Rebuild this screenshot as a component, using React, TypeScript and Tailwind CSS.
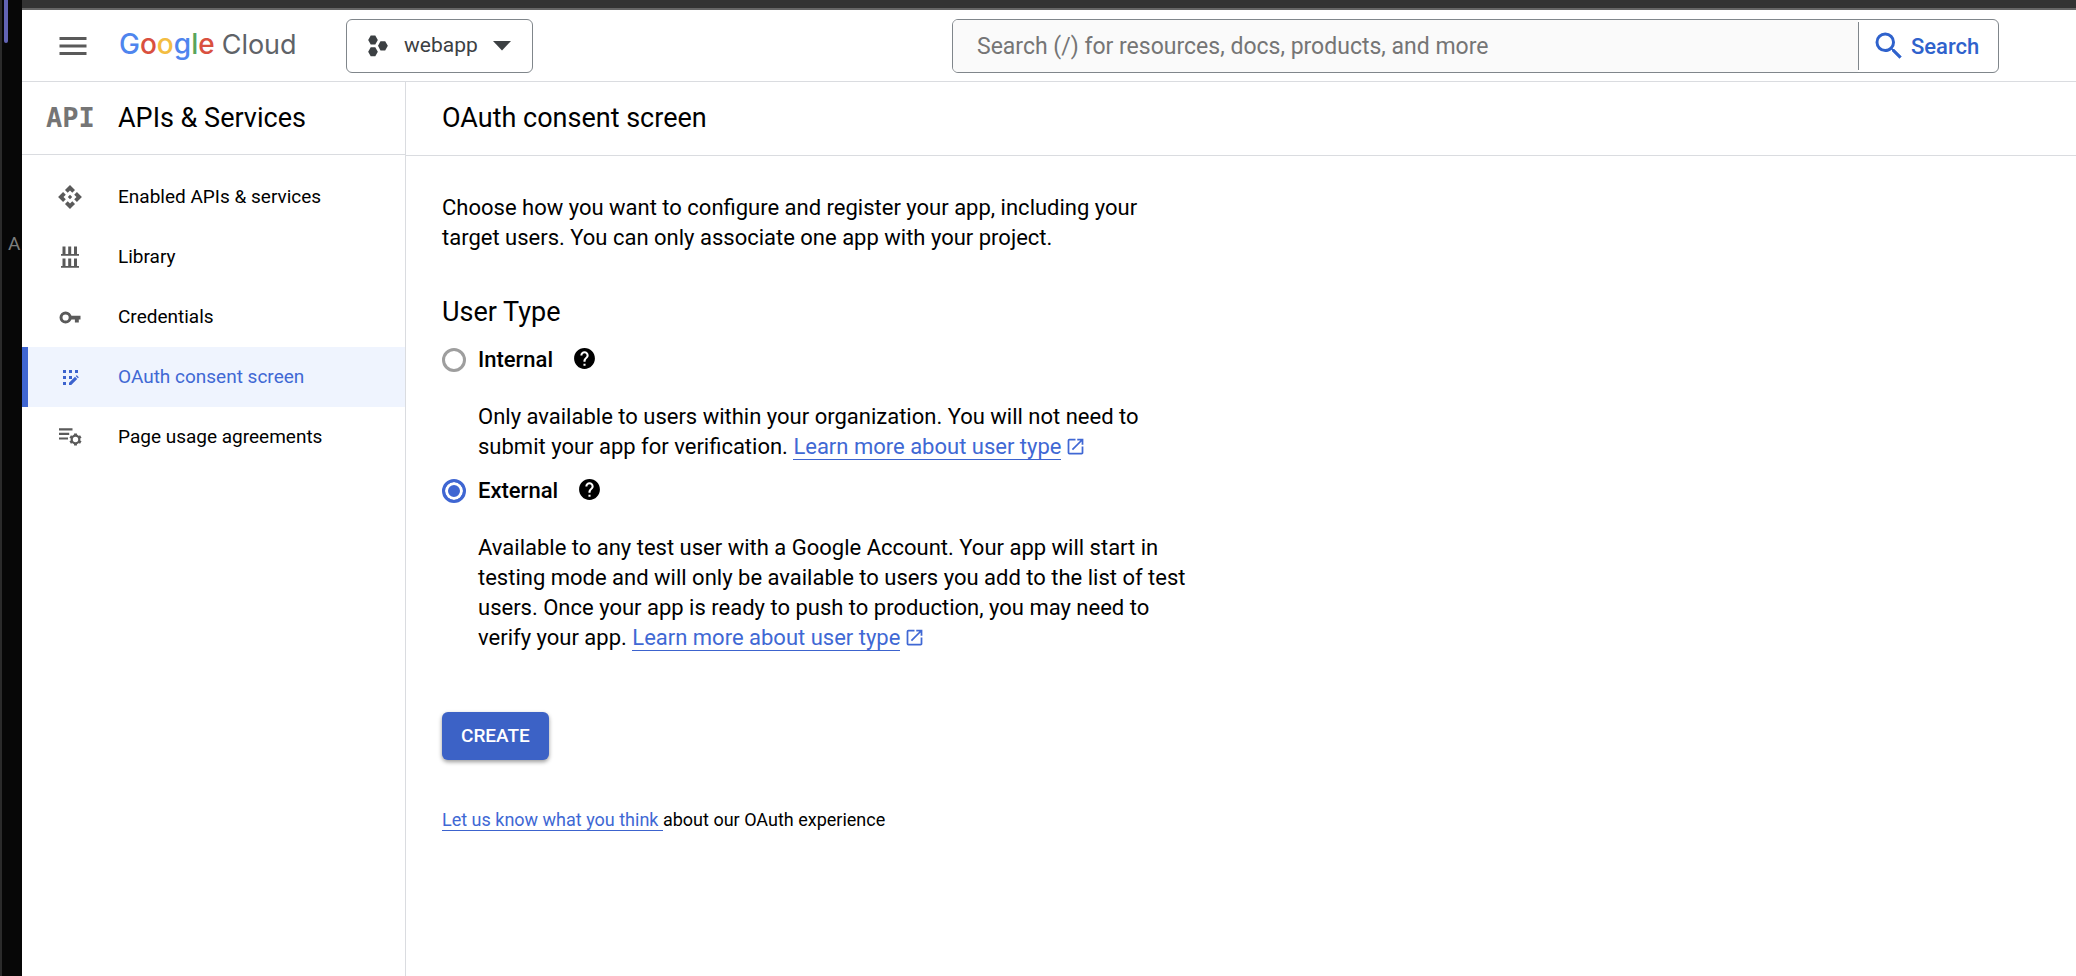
import { useState, type ReactNode } from "react";
import { MdApi, MdHelp, MdMenu, MdOpenInNew, MdSearch } from "react-icons/md";

function LibraryIcon() {
  return (
    <svg width="24" height="24" viewBox="0 0 24 24" fill="currentColor" aria-hidden="true">
      <path d="M4.500 1.500h3v7.600h2.700V1.500h3v7.600h2.800V1.500h3v7.600H21v1.700H3V9.100h1.500z" />
      <path d="M4.500 13.500h3v7.600h2.700v-7.600h3v7.600h2.800v-7.600h3v7.600H21v1.700H3v-1.700h1.500z" />
    </svg>
  );
}

function KeyIcon() {
  return (
    <svg width="24" height="24" viewBox="0 0 24 24" aria-hidden="true">
      <circle cx="7.600" cy="12.500" r="4.600" fill="none" stroke="currentColor" strokeWidth="3" />
      <path d="M12.500 10.800h10v3.800h-1.700v3h-3.900v-3h-4.400z" fill="currentColor" />
    </svg>
  );
}

function ConsentIcon() {
  return (
    <svg width="24" height="24" viewBox="0 0 24 24" fill="currentColor" aria-hidden="true">
      <path d="M5 5h3v3H5zM11 5h3v3h-3zM17 5h3v3h-3zM5 11h3v3H5zM11 11h3v3h-3zM5 17h3v3H5z" />
      <path d="M11 20v-2.200l6-6 2.200 2.200-6 6zM17.700 11.100l.6-.6q.4-.4.800 0l1.400 1.400q.4.400 0 .8l-.6.6z" />
    </svg>
  );
}

function AgreementsIcon() {
  return (
    <svg width="26" height="24" viewBox="0 0 26 24" aria-hidden="true">
      <path d="M2 4.300h13.500M2 8.900h10.200M2 13.500h9" stroke="currentColor" strokeWidth="2.200" />
      <g stroke="currentColor" fill="none" transform="translate(18.500 14.500)">
        <circle r="3.800" strokeWidth="2.200" />
        <path
          strokeWidth="2.900"
          d="M0-4v-2.100M0 4v2.100M3.500-2l1.800-1.050M-3.500 2l-1.800 1.050M3.500 2l1.800 1.050M-3.500-2l-1.800-1.050"
        />
      </g>
    </svg>
  );
}

function ProjectIcon() {
  return (
    <svg width="20" height="22" viewBox="0 0 20 22" fill="currentColor" aria-hidden="true">
      <path d="M2.700.5h4.600L9.800 5l-2.500 4.500H2.700L.2 5z" />
      <path d="M2.700 12.300h4.600l2.500 4.500-2.500 4.500H2.700L.2 16.800z" />
      <path d="M12.500 6.200h4.700l2.600 4.600-2.600 4.600h-4.700L10 10.800z" />
    </svg>
  );
}

const navItems: { label: string; icon: ReactNode; active?: boolean }[] = [
  { label: "Enabled APIs & services", icon: <MdApi size={26} /> },
  { label: "Library", icon: <LibraryIcon /> },
  { label: "Credentials", icon: <KeyIcon /> },
  { label: "OAuth consent screen", icon: <ConsentIcon />, active: true },
  { label: "Page usage agreements", icon: <AgreementsIcon /> },
];

function TopBar() {
  return (
    <header className="flex h-[72px] shrink-0 items-center border-b border-[#dadce0] bg-white pl-[33px] pr-[77px]">
      <button type="button" aria-label="Main menu" className="shrink-0 text-[#5a5a5a]">
        <MdMenu size={36} />
      </button>
      <a
        href="#home"
        className="ml-7 flex w-[227px] shrink-0 items-baseline gap-[7px] pb-0.5 font-['Inter',sans-serif] text-[28px] leading-8"
      >
        <span className="font-medium">
          <span className="text-[#4f85ee]">G</span>
          <span className="text-[#d9503f]">o</span>
          <span className="text-[#f3bd42]">o</span>
          <span className="text-[#4f85ee]">g</span>
          <span className="text-[#58a55c]">l</span>
          <span className="text-[#d9503f]">e</span>
        </span>
        <span className="text-[27px] text-[#5f6368]">Cloud</span>
      </a>
      <button
        type="button"
        className="flex h-[54px] shrink-0 items-center rounded-md border border-[#80868b] px-[21px] text-[21px] text-[#3c4043]"
      >
        <ProjectIcon />
        <span className="ml-4">webapp</span>
        <svg className="ml-[15px]" width="18" height="10" viewBox="0 0 18 10" fill="currentColor" aria-hidden="true">
          <path d="M0 0h18L9 9.500z" />
        </svg>
      </button>
      <form
        role="search"
        className="ml-auto flex h-[54px] w-[1047px] items-stretch overflow-hidden rounded-md border border-[#80868b]"
        onSubmit={(e) => e.preventDefault()}
      >
        <input
          type="text"
          aria-label="Search"
          placeholder="Search (/) for resources, docs, products, and more"
          className="min-w-0 flex-1 bg-[#fafafa] px-6 pt-1 text-[23px] text-black outline-none placeholder:text-[#757575]"
        />
        <button
          type="submit"
          className="my-0.5 flex w-[140px] shrink-0 items-center gap-1 border-l border-[#80868b] pl-3 text-[22px] font-medium text-[#2f62cc]"
        >
          <MdSearch size={36} />
          <span className="pt-0.5">Search</span>
        </button>
      </form>
    </header>
  );
}

function Sidebar() {
  return (
    <aside className="w-[384px] shrink-0 border-r border-[#dadce0]">
      <div className="flex h-[73px] items-center border-b border-[#dadce0] pl-6">
        <span className="w-[72px] font-['DejaVu_Sans_Mono',monospace] text-[27px] font-bold text-[#757575]">API</span>
        <h2 className="text-[27px] leading-9">APIs &amp; Services</h2>
      </div>
      <nav className="pt-3">
        {navItems.map(({ label, icon, active }) => (
          <a
            key={label}
            href="#nav"
            aria-current={active ? "page" : undefined}
            className={
              active
                ? "flex h-[60px] items-center border-l-6 border-[#3f66d2] bg-[#eff4fe] pl-[26px] text-[19px] text-[#4068d4]"
                : "flex h-[60px] items-center pl-8 text-[19px] text-black"
            }
          >
            <span className={active ? "flex w-8 justify-center text-[#3c63ce]" : "flex w-8 justify-center text-[#5a5a5a]"}>
              {icon}
            </span>
            <span className="ml-8">{label}</span>
          </a>
        ))}
      </nav>
    </aside>
  );
}

const linkClass = "border-b border-[#3c63ce] text-[#4068d4]";

function LearnMore() {
  return (
    <>
      <a href="#user-type" className={linkClass}>
        Learn more about user type
      </a>
      <MdOpenInNew size={21} className="ml-1 inline align-[-3px] text-[#4068d4]" aria-hidden="true" />
    </>
  );
}

function UserTypeOption(props: {
  value: string;
  checked: boolean;
  onSelect: (value: string) => void;
  children: ReactNode;
}) {
  const { value, checked, onSelect, children } = props;
  return (
    <div>
      <div className="flex h-[30px] items-center">
        <input
          id={value}
          type="radio"
          name="user-type"
          checked={checked}
          onChange={() => onSelect(value)}
          className="size-6 appearance-none rounded-full border-3 border-[#9e9e9e] checked:border-[#3f66d2] checked:bg-[#3f66d2] checked:shadow-[inset_0_0_0_3px_#ffffff]"
        />
        <label htmlFor={value} className="ml-3 font-medium">
          {value}
        </label>
        <button type="button" aria-label={`Help for ${value}`} className="mb-1 ml-[19px]">
          <MdHelp size={25} />
        </button>
      </div>
      <p className="mt-[27px] max-w-[756px] pl-9">{children}</p>
    </div>
  );
}

function ConsentScreen() {
  const [userType, setUserType] = useState("External");
  return (
    <main className="min-w-0 flex-1">
      <div className="flex h-[74px] items-center border-b border-[#dadce0] pb-0.5 pl-9">
        <h1 className="text-[27px] leading-9">OAuth consent screen</h1>
      </div>
      <div className="px-9 pt-[37px] text-[22px] leading-[30px]">
        <p className="max-w-[740px]">
          Choose how you want to configure and register your app, including your target users. You can only associate one
          app with your project.
        </p>
        <h2 className="mt-[41px] text-[27px] leading-9">User Type</h2>
        <div className="mt-[15px] flex flex-col gap-3.5">
          <UserTypeOption value="Internal" checked={userType === "Internal"} onSelect={setUserType}>
            Only available to users within your organization. You will not need to submit your app for verification.{" "}
            <LearnMore />
          </UserTypeOption>
          <UserTypeOption value="External" checked={userType === "External"} onSelect={setUserType}>
            Available to any test user with a Google Account. Your app will start in testing mode and will only be
            available to users you add to the list of test users. Once your app is ready to push to production, you may
            need to verify your app. <LearnMore />
          </UserTypeOption>
        </div>
        <button
          type="button"
          className="mt-[59px] flex h-12 items-center rounded-md bg-[#3c62c6] px-[19px] text-[19px] font-medium text-white shadow-[0_2px_4px_rgba(0,0,0,0.4)]"
        >
          CREATE
        </button>
        <p className="mt-12 text-[18px] leading-6">
          <a href="#feedback" className={linkClass}>
            Let us know what you think{" "}
          </a>
          about our OAuth experience
        </p>
      </div>
    </main>
  );
}

export default function App() {
  return (
    <div className="flex min-h-screen bg-white font-['Roboto',sans-serif] text-black">
      <div className="w-[22px] shrink-0 overflow-hidden border-l-2 border-[#2b2b2b] bg-[#070707]">
        <div className="ml-0.5 h-[43px] w-1 rounded-b-sm bg-[#6264b4]" />
        <div className="mt-[187px] pl-1.5 text-[19px] leading-7 text-[#7d7d7d]">A</div>
      </div>
      <div className="flex min-w-0 flex-1 flex-col">
        <div className="h-2.5 shrink-0 border-b-2 border-[#666666] bg-[#333333]" />
        <TopBar />
        <div className="flex flex-1">
          <Sidebar />
          <ConsentScreen />
        </div>
      </div>
    </div>
  );
}
